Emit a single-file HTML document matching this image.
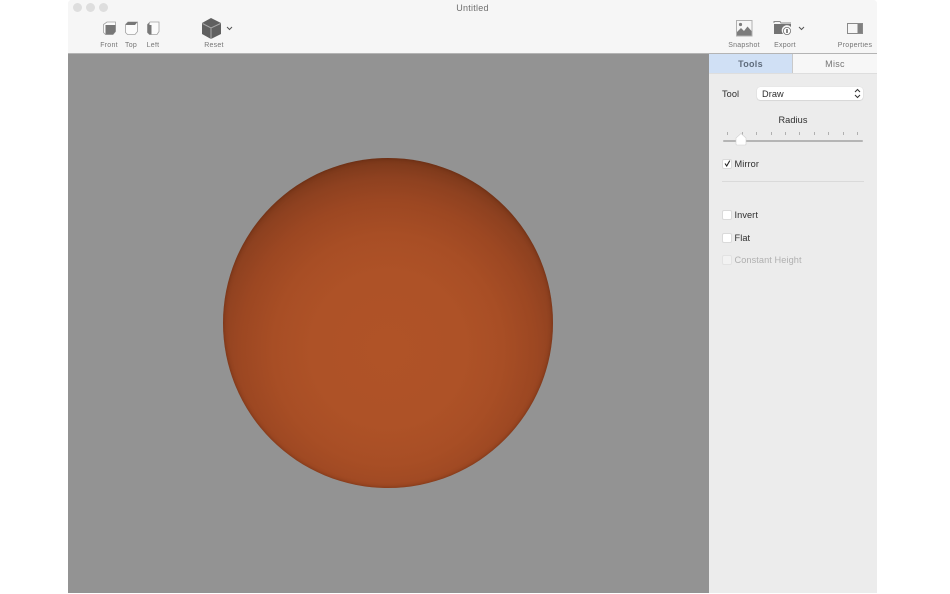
<!DOCTYPE html>
<html><head><meta charset="utf-8">
<style>
html,body{margin:0;padding:0;background:#fff;}
body{width:950px;height:594px;position:relative;overflow:hidden;font-family:"Liberation Sans",sans-serif;}
.a{position:absolute;}
.win{left:68px;top:0;width:809px;height:593px;background:#ececec;overflow:hidden;border-radius:4px 4px 0 0;}
.bar{left:68px;top:0;width:809px;height:53px;background:#f6f6f6;border-radius:4px 4px 0 0;}
.light{width:9px;height:9px;border-radius:50%;background:#dedede;top:3px;}
.tl{font-size:7px;color:#757575;text-align:center;letter-spacing:.25px;top:41px;line-height:9px;filter:blur(.25px);}
.lab{font-size:9.2px;color:#2e2e2e;line-height:12px;white-space:nowrap;letter-spacing:.08px;filter:blur(.2px);}
.cb{left:722px;width:10px;height:10px;box-sizing:border-box;background:#fff;border:1px solid #dadada;border-radius:2px;}
.tick{width:1px;height:3px;background:#b0b0b0;top:132px;}
svg.ic{filter:blur(.3px);}
</style></head>
<body>
<div class="a win"></div>
<div class="a bar"></div>
<div class="a light" style="left:73px"></div>
<div class="a light" style="left:86px"></div>
<div class="a light" style="left:99px"></div>
<div class="a" style="left:68px;width:809px;top:2px;text-align:center;font-size:9px;color:#6e6e6e;line-height:12px;letter-spacing:.25px;filter:blur(.2px)">Untitled</div>

<svg class="a ic" style="left:100px;top:20px" width="64" height="16" viewBox="0 0 64 16">
  <g fill="#fbfbfb" stroke="#a2a2a2" stroke-width=".8">
    <path d="M3.5 4.5 L7 2 H15.5 V11.5 L13 14.5 H5.5 L3.5 12.5 Z"/>
    <path d="M25.5 4.5 L28 2 H37.5 V11.5 L35 14.5 H27.5 L25.5 12.5 Z"/>
    <path d="M47.5 4.5 L50 2 H59 V11.5 L57 14.5 H49.5 L47.5 12.5 Z"/>
  </g>
  <path d="M5.5 5 H15.5 V11.5 L13 14.5 H5.5 Z" fill="#777"/>
  <path d="M25.5 4.5 L28 2 H37.5 L35 5 H26.5 Z" fill="#777"/>
  <path d="M49.5 5 V2.5 L47.5 4.5 V12.5 L49.5 14.5 H51.5 V5 Z" fill="#777"/>
</svg>
<div class="a tl" style="left:99px;width:20px">Front</div>
<div class="a tl" style="left:121px;width:20px">Top</div>
<div class="a tl" style="left:143px;width:20px">Left</div>

<svg class="a ic" style="left:200px;top:17px" width="22" height="23" viewBox="0 0 22 23">
  <path d="M11 1 L21 6 V17 L11 22 L2 17 V6 Z" fill="#606060"/>
  <path d="M2.5 6.5 L11 11 L20.5 6.5 M11 11 V22" fill="none" stroke="#a8a8a8" stroke-width="1"/>
</svg>
<svg class="a ic" style="left:226px;top:26px" width="7" height="5" viewBox="0 0 7 5"><path d="M1 1 L3.5 3.5 L6 1" fill="none" stroke="#555" stroke-width="1"/></svg>
<div class="a tl" style="left:199px;width:30px">Reset</div>

<svg class="a ic" style="left:736px;top:20px" width="17" height="17" viewBox="0 0 17 17">
  <rect x=".5" y=".5" width="15.5" height="15.5" fill="#f6f6f6" stroke="#b0b0b0"/>
  <path d="M1 15.5 V12 L5 8 L8 11 L11.5 6.5 L15.5 11 V15.5 Z" fill="#7c7c7c"/>
  <circle cx="4.5" cy="4.5" r="1.6" fill="#7c7c7c"/>
</svg>
<svg class="a ic" style="left:773px;top:20px" width="19" height="16" viewBox="0 0 19 16">
  <path d="M1 3 V1.5 H7 L8 3 H18" fill="none" stroke="#8a8a8a" stroke-width="1"/>
  <path d="M1 4 H18 V7 A5 5 0 0 0 10 14 H1 Z" fill="#737373"/>
  <circle cx="14" cy="11" r="3.6" fill="#fff" stroke="#737373" stroke-width=".8"/>
  <path d="M14 9 V13" stroke="#555" stroke-width="1.4"/>
</svg>
<svg class="a ic" style="left:798px;top:26px" width="7" height="5" viewBox="0 0 7 5"><path d="M1 1 L3.5 3.5 L6 1" fill="none" stroke="#555" stroke-width="1"/></svg>
<svg class="a ic" style="left:847px;top:23px" width="16" height="11" viewBox="0 0 16 11">
  <rect x=".5" y=".5" width="15" height="10" fill="#f6f6f6" stroke="#8a8a8a"/>
  <rect x="10.5" y="1" width="4.5" height="9" fill="#808080"/>
</svg>
<div class="a tl" style="left:724px;width:40px">Snapshot</div>
<div class="a tl" style="left:770px;width:30px">Export</div>
<div class="a tl" style="left:830px;width:50px">Properties</div>

<div class="a" style="left:68px;top:53px;width:641px;height:540px;background:#939393"></div>
<div class="a" style="left:68px;top:53px;width:809px;height:1px;background:#b4b4b4"></div>
<div class="a" style="left:223px;top:158px;width:330px;height:330px;border-radius:50%;background:radial-gradient(circle 191px at 50% 58%,#b05327 0%,#ae5227 40%,#a84e25 60%,#9c4722 78%,#8e4120 90%,#7a381a 100%);box-shadow:inset 0 0 4px rgba(70,25,8,.5)"></div>

<div class="a" style="left:709px;top:54px;width:84px;height:19px;background:#d0e0f5;border-right:1px solid #c9c9c9;text-align:center;font-size:9px;font-weight:bold;line-height:20px;color:#5f6c7c;letter-spacing:.3px;box-sizing:border-box;filter:blur(.15px)">Tools</div>
<div class="a" style="left:793px;top:54px;width:84px;height:19px;background:#f7f7f7;text-align:center;font-size:9px;line-height:20px;color:#757575;letter-spacing:.3px">Misc</div>
<div class="a" style="left:709px;top:73px;width:168px;height:1px;background:#dedede"></div>

<div class="a lab" style="left:722px;top:87.5px">Tool</div>
<div class="a" style="left:757px;top:87px;width:106px;height:13px;background:#fff;border-radius:3px;box-shadow:0 0 .5px rgba(0,0,0,.25),0 .5px 1px rgba(0,0,0,.15)"></div>
<div class="a lab" style="left:762px;top:87.5px">Draw</div>
<svg class="a ic" style="left:854px;top:88px" width="7" height="11" viewBox="0 0 7 11"><path d="M1 4 L3.5 1.5 L6 4 M1 7 L3.5 9.5 L6 7" fill="none" stroke="#333" stroke-width="1"/></svg>

<div class="a lab" style="left:709px;width:168px;top:114px;text-align:center">Radius</div>
<div class="a tick" style="left:727px"></div><div class="a tick" style="left:742px"></div><div class="a tick" style="left:756px"></div><div class="a tick" style="left:771px"></div><div class="a tick" style="left:785px"></div><div class="a tick" style="left:799px"></div><div class="a tick" style="left:814px"></div><div class="a tick" style="left:828px"></div><div class="a tick" style="left:843px"></div><div class="a tick" style="left:857px"></div>
<div class="a" style="left:723px;top:140px;width:140px;height:2px;background:#b5b5b5;border-radius:1px"></div>
<svg class="a" style="left:735px;top:133px" width="12" height="13" viewBox="0 0 12 13"><path d="M6 .5 L11 5 V11 Q11 12 10 12 H2 Q1 12 1 11 V5 Z" fill="#fff" stroke="#d0d0d0" stroke-width=".6"/></svg>

<div class="a cb" style="top:159px"></div>
<svg class="a" style="left:722.5px;top:159px" width="9" height="9" viewBox="0 0 9 9"><path d="M2 4.5 L3.7 7 L6.8 1.6" fill="none" stroke="#222" stroke-width="1.1"/></svg>
<div class="a lab" style="left:734.5px;top:157.5px">Mirror</div>
<div class="a" style="left:722px;top:181px;width:142px;height:1px;background:#dadada"></div>
<div class="a cb" style="top:210px"></div>
<div class="a lab" style="left:734.5px;top:209px">Invert</div>
<div class="a cb" style="top:233px"></div>
<div class="a lab" style="left:734.5px;top:232px">Flat</div>
<div class="a cb" style="top:255px;background:#f2f2f2;border-color:#e2e2e2"></div>
<div class="a lab" style="left:734.5px;top:253.5px;color:#b0b0b0">Constant Height</div>
</body></html>
